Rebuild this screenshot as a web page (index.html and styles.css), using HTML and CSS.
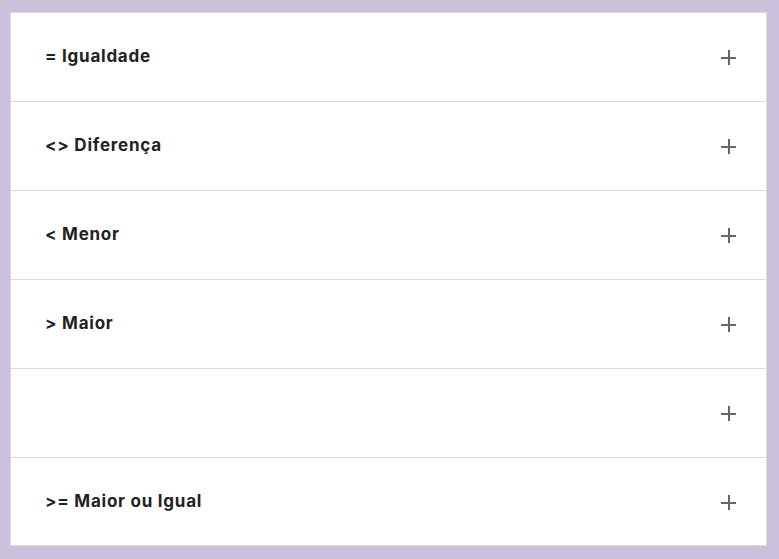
FILE: index.html
```html
<!DOCTYPE html>
<html lang="pt">
<head>
<meta charset="utf-8">
<link rel="stylesheet" href="styles.css">
</head>
<body>
<div class="accordion">
  <div class="item"><span class="title">= Igualdade</span><span class="plus"></span></div>
  <div class="item"><span class="title">&lt;&gt; Diferença</span><span class="plus"></span></div>
  <div class="item"><span class="title">&lt; Menor</span><span class="plus"></span></div>
  <div class="item"><span class="title">&gt; Maior</span><span class="plus"></span></div>
  <div class="item"><span class="title"></span><span class="plus"></span></div>
  <div class="item"><span class="title">&gt;= Maior ou Igual</span><span class="plus"></span></div>
</div>
</body>
</html>
```
FILE: styles.css
```css
html, body { margin: 0; padding: 0; }
body {
  background: #cbc1dd;
  padding: 12px 12px 13px 10px;
  font-family: "Inter", "Noto Sans", sans-serif;
}
.accordion {
  background: #fff;
  border: 1px solid #dcdcdc;
  box-sizing: border-box;
  height: 534px;
}
.item {
  border-bottom: 1px solid #dcdcdc;
  display: flex;
  align-items: center;
  justify-content: space-between;
  padding: 0 30px 2px 34px;
  box-sizing: border-box;
  height: 89px;
}
.item:last-child { border-bottom: none; height: 88px; }
.title {
  font-weight: 700;
  font-size: 17px;
  color: #222;
  letter-spacing: 0.75px;
}
.plus {
  position: relative;
  width: 15px;
  height: 15px;
  margin-top: 3px;
}
.plus::before, .plus::after {
  content: "";
  position: absolute;
  background: #666;
}
.plus::before { left: 0; right: 0; top: 6.5px; height: 2px; }
.plus::after { top: 0; bottom: 0; left: 6.5px; width: 2px; }
```
